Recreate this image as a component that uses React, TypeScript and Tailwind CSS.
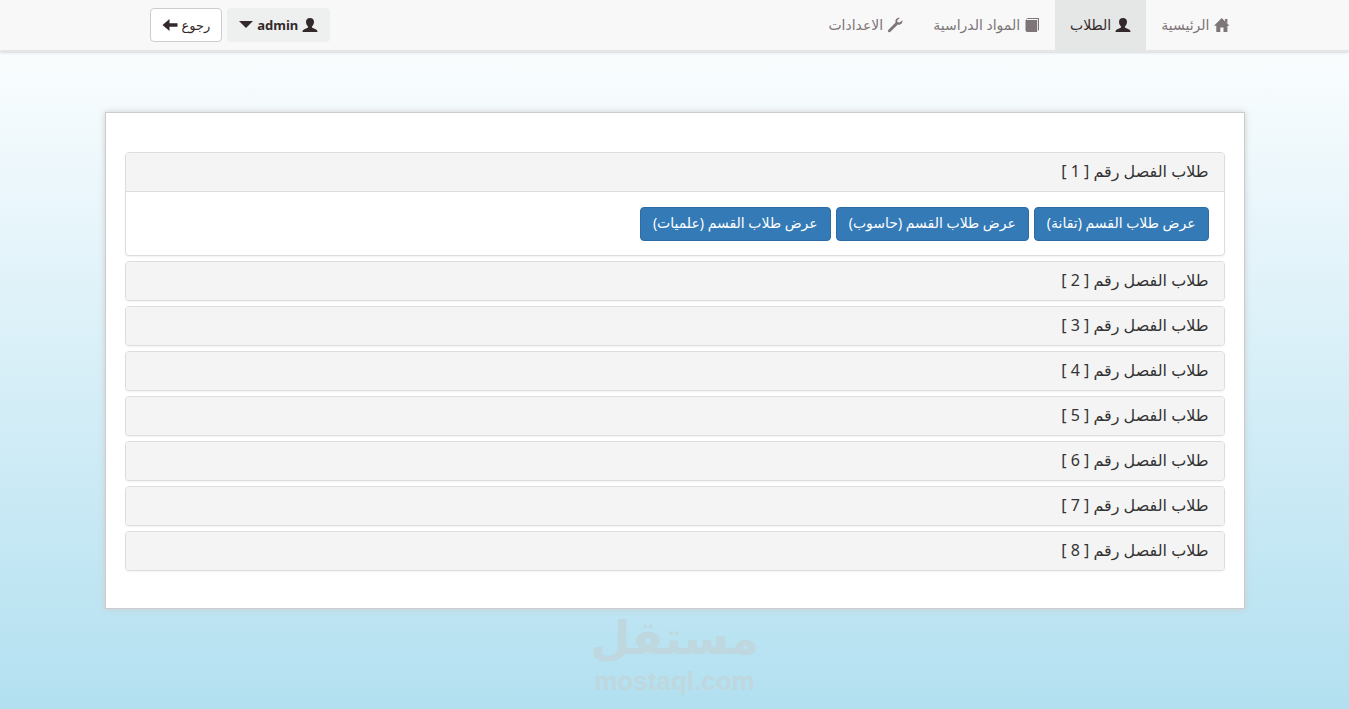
import React, { useState } from 'react';

type IconProps = { className?: string };

const HomeIcon: React.FC<IconProps> = ({ className }) => (
    <svg viewBox="0 0 16 16" fill="currentColor" aria-hidden="true" className={className}>
        <path d="M7.700 1 15.500 8.800h-2.100v6.200H9.500v-4.500H6.300V15H2.300V8.800H0z" />
        <path d="M11 2h2.400v4.500L11 4.200z" />
    </svg>
);

const UserIcon: React.FC<IconProps> = ({ className }) => (
    <svg viewBox="0 0 16 16" fill="currentColor" aria-hidden="true" className={className}>
        <path d="M8 1C5.500 1 4 2.500 4 4.800c0 2 .9 3.700 2 4.600.3.700 0 1.200-.9 1.600L1.900 12.400C1 12.900.5 13.500.5 15h15c0-1.500-.5-2.100-1.400-2.600L10.900 11c-.9-.4-1.200-.9-.9-1.600 1.100-.9 2-2.600 2-4.600C12 2.500 10.500 1 8 1z" />
    </svg>
);

const BookIcon: React.FC<IconProps> = ({ className }) => (
    <svg viewBox="0 0 16 16" fill="currentColor" aria-hidden="true" className={className}>
        <path d="M3.500 1H15v12.500h-1.100V2H3z" />
        <path d="M2.800 2.900h10.300V15H3.500C2.200 15 1.500 14.300 1.500 13V3.500L3 1.600z" />
    </svg>
);

const WrenchIcon: React.FC<IconProps> = ({ className }) => (
    <svg viewBox="0 0 16 16" fill="currentColor" aria-hidden="true" className={className}>
        <path d="M12.800.9 10.200 3.200l.4 2 2.100.4 2.700-2.300c.5 2.900-1.800 5.100-4.600 4.300L3.200 14.900c-1.400 1-3-.6-2-1.900L8.600 5.500C7.800 2.700 10 .3 12.800.9z" />
    </svg>
);

const ArrowLeftIcon: React.FC<IconProps> = ({ className }) => (
    <svg viewBox="0 0 16 16" fill="currentColor" aria-hidden="true" className={className}>
        <path d="M.500 8l7-6v4.200h8v3.600h-8V14z" />
    </svg>
);

const navItems = [
    { label: 'الرئيسية', Icon: HomeIcon },
    { label: 'الطلاب', Icon: UserIcon, active: true },
    { label: 'المواد الدراسية', Icon: BookIcon },
    { label: 'الاعدادات', Icon: WrenchIcon },
];

const semesters = [1, 2, 3, 4, 5, 6, 7, 8];
const departments = ['تقانة', 'حاسوب', 'علميات'];

const App: React.FC = () => {
    const [open, setOpen] = useState<number | null>(1);

    return (
        <div
            dir="rtl"
            lang="ar"
            className="min-h-screen bg-linear-to-b from-white to-[#b2e0f0] font-['Noto_Sans','DejaVu_Sans',sans-serif] text-sm text-[#333]"
        >
            <nav className="border-b-2 border-[#e5e7e6] bg-[#f8f8f8] shadow">
                <div className="mx-auto flex h-[50px] max-w-[1140px] items-center justify-between">
                    <ul className="flex h-full">
                        {navItems.map(({ label, Icon, active }) => (
                            <li key={label}>
                                <a
                                    href="#"
                                    className={
                                        active
                                            ? 'flex h-full items-center gap-1 bg-[#e5e7e6] px-[15px] text-[#33292b]'
                                            : 'flex h-full items-center gap-1 px-[15px] text-[#7d7577]'
                                    }
                                >
                                    <Icon className="size-4" />
                                    {label}
                                </a>
                            </li>
                        ))}
                    </ul>
                    <div className="flex gap-[5px] pl-[45px]">
                        <button type="button" className="flex h-[34px] items-center gap-1 rounded-sm bg-[#eef0ef] px-3 text-[13px] font-bold text-[#33292b]">
                            <UserIcon className="size-4" />
                            admin
                            <svg viewBox="0 0 14 8" fill="currentColor" aria-hidden="true" className="h-2 w-[14px]">
                                <path d="M0 0h14L7 7z" />
                            </svg>
                        </button>
                        <button type="button" className="flex h-[34px] items-center gap-1 rounded-sm border border-[#ccc] bg-white px-[11px] text-[13px] text-[#33292b]">
                            رجوع
                            <ArrowLeftIcon className="size-4" />
                        </button>
                    </div>
                </div>
            </nav>

            <main className="mx-auto mt-[60px] flex max-w-[1140px] flex-col gap-[5px] border border-[#ccc] bg-white px-[19px] pt-[39px] pb-[37px] shadow-[0_0_6px_#ccc]">
                {semesters.map((n) => (
                    <section key={n} className="overflow-hidden rounded-sm border border-[#ddd] bg-white shadow-xs">
                        <h4>
                            <button
                                type="button"
                                aria-expanded={open === n}
                                onClick={() => setOpen(open === n ? null : n)}
                                className="flex h-[38px] w-full items-center bg-[#f4f4f4] px-[15px] pb-[2px] text-base"
                            >
                                طلاب الفصل رقم [ {n} ]
                            </button>
                        </h4>
                        {open === n && (
                            <div className="flex flex-wrap gap-[5px] border-t border-[#ddd] px-[15px] pt-[15px] pb-[14px]">
                                {departments.map((name) => (
                                    <button
                                        key={name}
                                        type="button"
                                        className="h-[34px] rounded-sm border border-[#2e6da4] bg-[#337ab7] px-3 pb-[2px] text-white"
                                    >
                                        عرض طلاب القسم ({name})
                                    </button>
                                ))}
                            </div>
                        )}
                    </section>
                ))}
            </main>

            <footer dir="ltr" className="flex flex-col items-center font-bold text-[#bfd7df]">
                <span lang="ar" dir="rtl" className="font-['DejaVu_Sans',sans-serif] text-[46px] leading-[58px]">مستقل</span>
                <span className="font-['Liberation_Sans',sans-serif] text-[26px] leading-[28px]">mostaql.com</span>
            </footer>
        </div>
    );
};

export default App;
